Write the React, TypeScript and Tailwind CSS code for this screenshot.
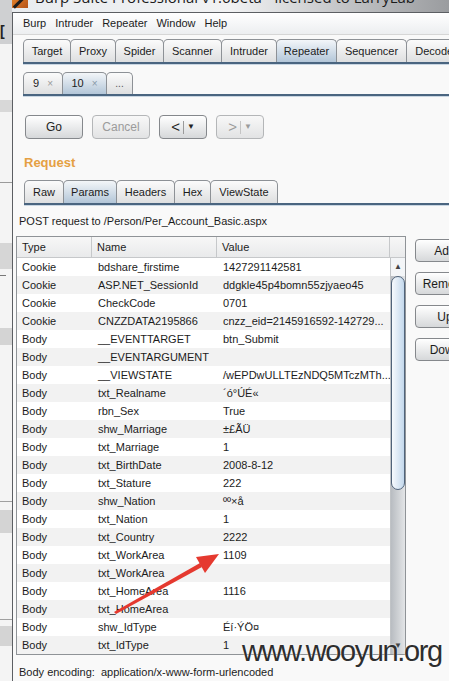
const rows: [string, string, string][] = [
  ["Cookie", "bdshare_firstime", "1427291142581"],
  ["Cookie", "ASP.NET_SessionId", "ddgkle45p4bomn55zjyaeo45"],
  ["Cookie", "CheckCode", "0701"],
  ["Cookie", "CNZZDATA2195866", "cnzz_eid=2145916592-142729..."],
  ["Body", "__EVENTTARGET", "btn_Submit"],
  ["Body", "__EVENTARGUMENT", ""],
  ["Body", "__VIEWSTATE", "/wEPDwULLTEzNDQ5MTczMTh..."],
  ["Body", "txt_Realname", "´ó°ÚÉ«"],
  ["Body", "rbn_Sex", "True"],
  ["Body", "shw_Marriage", "±£ÃÜ"],
  ["Body", "txt_Marriage", "1"],
  ["Body", "txt_BirthDate", "2008-8-12"],
  ["Body", "txt_Stature", "222"],
  ["Body", "shw_Nation", "ºº×å"],
  ["Body", "txt_Nation", "1"],
  ["Body", "txt_Country", "2222"],
  ["Body", "txt_WorkArea", "1109"],
  ["Body", "txt_WorkArea", ""],
  ["Body", "txt_HomeArea", "1116"],
  ["Body", "txt_HomeArea", ""],
  ["Body", "shw_IdType", "Éí·ÝÖ¤"],
  ["Body", "txt_IdType", "1"],
];

function Tab({ label, w, on, h = "h-[23px]" }: { label: React.ReactNode; w: string; on?: boolean; h?: string }) {
  return (
    <div
      className={`${w} ${h} -mr-px flex shrink-0 items-center justify-center rounded-t-[5px] border border-b-0 border-[#8d9196] text-[11px] ${
        on ? "bg-gradient-to-b from-[#f3f6f9] to-[#b3c6d8]" : "bg-gradient-to-b from-[#fbfbfb] to-[#dedfe0]"
      }`}
    >
      {label}
    </div>
  );
}

function Strip({ children, className = "" }: { children: React.ReactNode; className?: string }) {
  return (
    <div className={className}>
      <div className="flex items-end">{children}</div>
      <div className="h-[2px] bg-[#4a6580]" />
      <div className="h-px bg-[#c9d6e2]" />
    </div>
  );
}

function Btn({ children, w, off }: { children: React.ReactNode; w: string; off?: boolean }) {
  return (
    <div
      className={`${w} flex h-[24px] shrink-0 items-center justify-center rounded-[4px] border text-[12px] ${
        off
          ? "border-[#b4b6b8] bg-gradient-to-b from-[#f8f8f8] to-[#e2e3e4] text-[#9b9b9b]"
          : "border-[#85888c] bg-gradient-to-b from-[#ffffff] to-[#d6d8da] text-[#222]"
      }`}
    >
      {children}
    </div>
  );
}

function NavBtn({ dir, off }: { dir: string; off?: boolean }) {
  return (
    <Btn w="w-[48px]" off={off}>
      <span className="text-[15px]">{dir}</span>
      <span className={`mx-[3px] h-[13px] w-px ${off ? "bg-[#c4c4c4]" : "bg-[#9a9a9a]"}`} />
      <span className="text-[8px]">▼</span>
    </Btn>
  );
}

function Arrow() {
  return (
    <svg className="absolute left-0 top-0" width="449" height="681" viewBox="0 0 449 681">
      <polygon points="114,612 200,563 202,567 116,614" fill="#e5392f" />
      <polygon points="219,554 196,557 205,573" fill="#e5392f" />
    </svg>
  );
}

export default function App() {
  return (
    <div className="relative flex h-[681px] w-[449px] overflow-hidden bg-[#f9f9f9] font-['Liberation_Sans',Arial,sans-serif] text-[#1c1c1c]">
      {/* background window edge */}
      <div className="flex w-[12px] shrink-0 flex-col bg-[#f4f4f4]">
        <div className="relative h-[44px] bg-[#cfd0d2]">
          <span className="absolute left-0 top-[24px] text-[14px] font-bold leading-none text-[#222]">[</span>
        </div>
        <div className="mt-[56px] h-[12px] bg-[#d8d8d8]" />
        <div className="mt-[70px] h-px bg-[#9a9a9a]" />
        <div className="mt-[60px] h-[26px] bg-[#d6d6d6]" />
        <div className="mt-[6px] h-px w-[6px] bg-[#777]" />
        <div className="mt-[52px] h-[17px] bg-[#d4d4d4]" />
        <div className="mt-[156px] h-px bg-[#a0a0a0]" />
        <div className="mt-[8px] h-[23px] bg-[#d4d4d4]" />
        <div className="mt-[86px] h-px bg-[#a0a0a0]" />
        <div className="mt-[6px] h-[20px] bg-[#d4d4d4]" />
      </div>

      <div className="flex min-w-0 flex-1 flex-col">
        {/* title bar (cut off) */}
        <div className="flex h-[12px] shrink-0 overflow-hidden bg-gradient-to-r from-[#e9ecef] via-[#f1f2f3] to-[#9a9c9f]">
          <div className="mt-[-8px] h-[16px] w-[16px] shrink-0 bg-gradient-to-br from-[#f08c2a] to-[#b4531a]">
            <div className="ml-[6px] mt-[2px] h-[16px] w-[3px] rotate-45 bg-[#1d1d1d]" />
          </div>
          <div className="ml-[7px] mt-[-13px] whitespace-nowrap font-['Open_Sans',sans-serif] text-[15px] leading-[20px] text-[#1b1b1b]">
            Burp Suite Professional v1.6beta - licensed to LarryLab
          </div>
        </div>

        <div className="flex flex-1 flex-col border-l border-t border-[#5c5f63]">
          {/* menu */}
          <div className="flex h-[22px] shrink-0 items-center gap-[9px] border-b border-[#d6d6d6] bg-gradient-to-b from-[#ffffff] to-[#eceef0] pl-[10px] text-[11px]">
            <span>Burp</span>
            <span>Intruder</span>
            <span>Repeater</span>
            <span>Window</span>
            <span>Help</span>
          </div>

          <Strip className="mt-[4px] pl-[10px]">
            <Tab label="Target" w="w-[48px]" />
            <Tab label="Proxy" w="w-[46px]" />
            <Tab label="Spider" w="w-[49px]" />
            <Tab label="Scanner" w="w-[59px]" />
            <Tab label="Intruder" w="w-[56px]" />
            <Tab label="Repeater" w="w-[61px]" on />
            <Tab label="Sequencer" w="w-[71px]" />
            <Tab label="Decoder" w="w-[60px]" />
          </Strip>

          <Strip className="mt-[7px] pl-[10px]">
            <Tab h="h-[22px]" w="w-[40px]" label={<><span>9</span><span className="ml-[8px] text-[10px] text-[#9a9a9a]">×</span></>} />
            <Tab h="h-[22px]" w="w-[45px]" on label={<><span>10</span><span className="ml-[8px] text-[10px] text-[#8a9aa8]">×</span></>} />
            <Tab h="h-[22px]" w="w-[27px]" label={<span className="text-[10px] text-[#555]">...</span>} />
          </Strip>

          {/* action buttons */}
          <div className="mt-[18px] flex gap-[9px] pl-[12px]">
            <Btn w="w-[58px]">Go</Btn>
            <Btn w="w-[58px]" off>Cancel</Btn>
            <NavBtn dir="<" />
            <NavBtn dir=">" off />
          </div>

          <div className="ml-[11px] mt-[16px] text-[13px] font-bold leading-[16px] text-[#e5a043]">Request</div>

          <Strip className="mt-[9px] pl-[11px]">
            <Tab label="Raw" w="w-[40px]" />
            <Tab label="Params" w="w-[54px]" on />
            <Tab label="Headers" w="w-[59px]" />
            <Tab label="Hex" w="w-[37px]" />
            <Tab label="ViewState" w="w-[68px]" />
          </Strip>

          <div className="ml-[6px] mt-[8px] text-[11px] leading-[14px]">POST request to /Person/Per_Account_Basic.aspx</div>

          <div className="mt-[8px] flex">
            {/* params table */}
            <div className="ml-[3px] flex w-[390px] shrink-0 flex-col border border-[#8f9397] bg-white text-[11px]">
              <div className="flex h-[21px] border-b border-[#c6c8ca] bg-gradient-to-b from-[#f7f7f7] to-[#e9eaeb]">
                <div className="flex w-[75px] items-center border-r border-[#c6c8ca] pl-[5px]">Type</div>
                <div className="flex w-[125px] items-center border-r border-[#c6c8ca] pl-[5px]">Name</div>
                <div className="flex w-[173px] items-center border-r border-[#c6c8ca] pl-[5px]">Value</div>
                <div className="flex-1" />
              </div>
              <div className="flex">
                <div className="w-[373px]">
                  {rows.map(([t, n, v], i) => (
                    <div key={i} className={`flex h-[18px] items-center ${i % 2 ? "bg-[#f2f2f2]" : "bg-white"}`}>
                      <div className="w-[75px] pl-[5px]">{t}</div>
                      <div className="w-[125px] pl-[6px]">{n}</div>
                      <div className="w-[173px] whitespace-nowrap pl-[6px]">{v}</div>
                    </div>
                  ))}
                </div>
                {/* scrollbar */}
                <div className="flex w-[15px] flex-col border-l border-[#c0c3c6] bg-gradient-to-r from-[#b8bcc1] to-[#e3e5e7]">
                  <div className="flex h-[18px] items-center justify-center bg-[#f3f5f7] text-[8px] text-[#444]">▲</div>
                  <div className="h-[214px] rounded-[7px] border border-[#50637a] bg-gradient-to-r from-[#f7fafd] to-[#c3d8ec]" />
                  <div className="flex-1" />
                  <div className="flex h-[16px] items-center justify-center text-[8px] text-[#444]">▼</div>
                </div>
              </div>
            </div>

            {/* side buttons */}
            <div className="ml-[9px] flex flex-col gap-[10px] pt-[3px]">
              {["Add", "Remove", "Up", "Down"].map((b) => (
                <div
                  key={b}
                  className="flex h-[23px] w-[60px] items-center justify-center rounded-[4px] border border-[#85888c] bg-gradient-to-b from-[#ffffff] to-[#d6d8da] text-[12px]"
                >
                  {b}
                </div>
              ))}
            </div>
          </div>

          <div className="ml-[6px] mt-[10px] whitespace-nowrap text-[11px] leading-[14px]">
            Body encoding:&nbsp; application/x-www-form-urlencoded
          </div>
        </div>
      </div>

      <Arrow />
      <div className="absolute left-[242px] top-[633px] font-['Liberation_Sans',Arial,sans-serif] text-[29px] leading-[36px] tracking-[-1.4px] text-[#2e2e2e] [text-shadow:0_0_2px_#fff]">
        www.wooyun.org
      </div>
    </div>
  );
}
